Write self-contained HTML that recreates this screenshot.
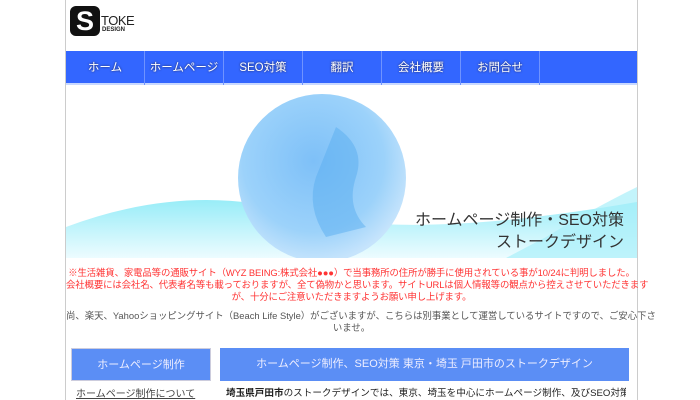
<!DOCTYPE html>
<html><head><meta charset="utf-8"><style>
*{margin:0;padding:0;box-sizing:border-box}
body{width:700px;height:400px;overflow:hidden;background:#fff;font-family:"Liberation Sans","Noto Sans CJK JP",sans-serif;position:relative}
.wrap{position:absolute;left:65px;top:0;width:573px;height:400px;border-left:1px solid #ccc;border-right:1px solid #ccc}
.logo{position:absolute;left:70px;top:6px}
.nav{position:absolute;left:66px;top:51px;width:571px;height:34px;background:#3366ff;border-bottom:2px solid #c8d8ff}
.nav div{position:absolute;top:0;height:34px;width:79px;color:#fff;font-size:11.5px;line-height:34px;text-align:center;border-right:1px solid #6f93ff;text-shadow:0 0 2px #224;white-space:nowrap}
.banner{position:absolute;left:66px;top:87px;width:571px;height:171px;overflow:hidden;background:#fff}
.red{position:absolute;left:66px;top:267px;width:571px;text-align:center;color:#f33;font-size:9.4px;line-height:12px;white-space:nowrap;letter-spacing:-0.1px}
.gray{position:absolute;left:66px;top:310px;width:571px;text-align:center;color:#555;font-size:9.4px;line-height:12px;white-space:nowrap}
.sb{position:absolute;left:71px;top:348px;width:140px;height:33px;background:#5b8ef5;color:#eef;font-size:11px;line-height:33px;text-align:center;border:1px solid #ccd}
.mh{position:absolute;left:220px;top:348px;width:409px;height:33px;background:#5b8ef5;color:#eef;font-size:11px;line-height:33px;text-align:center}
</style></head><body>
<div class="wrap"></div>
<div class="logo">
<div style="position:absolute;left:0;top:0;width:30px;height:30px;background:#111;border-radius:6px;color:#fff;font-weight:bold;font-size:27px;line-height:30px;text-align:center">S</div>
<div style="position:absolute;left:31px;top:7px;font-size:13px;color:#222;letter-spacing:-0.5px">TOKE</div>
<div style="position:absolute;left:32px;top:21px;font-size:6px;color:#222;font-weight:bold">DESIGN</div>
</div>
<div class="nav">
<div style="left:0">ホーム</div><div style="left:79px">ホームページ</div><div style="left:158px">SEO対策</div><div style="left:237px">翻訳</div><div style="left:316px">会社概要</div><div style="left:395px">お問合せ</div>
</div>
<div class="banner">
<svg width="571" height="171">
<defs>
<radialGradient id="g" cx="0.45" cy="0.4" r="0.6"><stop offset="0" stop-color="#7ec0f8"/><stop offset="0.7" stop-color="#9cd2fa"/><stop offset="1" stop-color="#c6e4fc"/></radialGradient>
<linearGradient id="w" x1="0" y1="0" x2="0" y2="1"><stop offset="0" stop-color="#7fe8f6"/><stop offset="1" stop-color="#e8fbff"/></linearGradient>
</defs>
<path d="M0 140 Q120 95 230 125 T571 115 L571 171 L0 171Z" fill="url(#w)" opacity="0.8"/>
<circle cx="256" cy="91" r="84" fill="url(#g)"/>
<path d="M270 40 Q300 60 290 90 Q280 120 300 140 L260 150 Q240 120 250 90 Z" fill="#5aaef0" opacity="0.5"/>
<path d="M480 150 Q530 120 571 100 L571 171 L440 171Z" fill="#a9f0fa" opacity="0.7"/>
<text x="558" y="138" text-anchor="end" font-size="16" fill="#333" font-family="Liberation Sans,Noto Sans CJK JP,sans-serif">ホームページ制作・SEO対策</text>
<text x="558" y="160" text-anchor="end" font-size="16" fill="#333" font-family="Liberation Sans,Noto Sans CJK JP,sans-serif">ストークデザイン</text>
</svg>
</div>
<div class="red">※生活雑貨、家電品等の通販サイト（WYZ BEING:株式会社●●●）で当事務所の住所が勝手に使用されている事が10/24に判明しました。<br>会社概要には会社名、代表者名等も載っておりますが、全て偽物かと思います。サイトURLは個人情報等の観点から控えさせていただきます<br>が、十分にご注意いただきますようお願い申し上げます。</div>
<div class="gray">尚、楽天、Yahooショッピングサイト（Beach Life Style）がございますが、こちらは別事業として運営しているサイトですので、ご安心下さ<br>いませ。</div>
<div class="sb">ホームページ制作</div>
<div style="position:absolute;left:76px;top:385px;font-size:10px;color:#444;text-decoration:underline">ホームページ制作について</div>
<div class="mh">ホームページ制作、SEO対策 東京・埼玉 戸田市のストークデザイン</div>
<div style="position:absolute;left:226px;top:385px;width:400px;overflow:hidden;white-space:nowrap;font-size:9.6px;color:#222"><b>埼玉県戸田市</b>のストークデザインでは、東京、埼玉を中心にホームページ制作、及びSEO対策を行</div>
</body></html>
